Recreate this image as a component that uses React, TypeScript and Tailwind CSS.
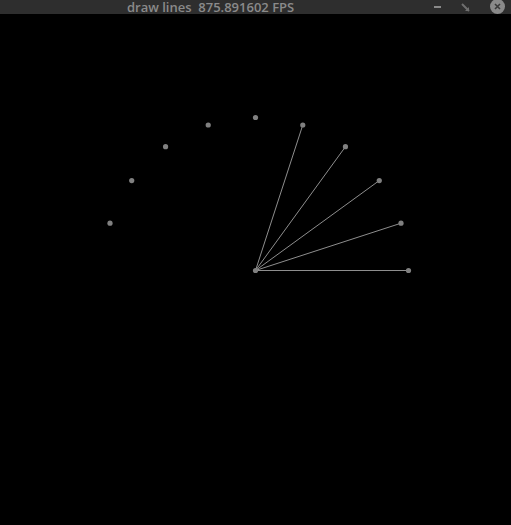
import React from "react";

const CX = 255.5;
const CY = 256.5;
const R = 153;

const points = Array.from({ length: 10 }, (_, i) => {
  const a = (i * 18 * Math.PI) / 180;
  return { x: CX + R * Math.cos(a), y: CY - R * Math.sin(a) };
});

const TitleBar = () => (
  <div className="relative flex h-[14px] shrink-0 items-center overflow-hidden bg-[#2e2e2e]">
    <span
      className="ml-[127px] whitespace-pre text-[13px] font-semibold leading-[14px] text-[#8a8a8a]"
      style={{ fontFamily: '"Open Sans", "DejaVu Sans", sans-serif' }}
    >
      draw lines  875.891602 FPS
    </span>
    <div className="ml-auto flex items-center gap-[20px] pr-[6px]">
      <div className="h-[2px] w-[7px] bg-[#8a8a8a]" />
      <svg width="9" height="9" viewBox="0 0 9 9">
        <path d="M1 1 L8 8" stroke="#6f6f6f" strokeWidth="2" />
        <path d="M4 8 L8 8 L8 4 Z" fill="#6f6f6f" />
      </svg>
      <div className="flex h-[15px] w-[15px] -translate-y-[1px] items-center justify-center rounded-full bg-[#8a8a8a]">
        <svg width="7" height="7" viewBox="0 0 7 7">
          <path d="M1 1 L6 6 M6 1 L1 6" stroke="#3a3a3a" strokeWidth="1.6" />
        </svg>
      </div>
    </div>
  </div>
);

const App = () => {
  return (
    <div className="flex h-[525px] w-[511px] flex-col overflow-hidden bg-black">
      <TitleBar />
      <div className="flex-1 bg-black">
        <svg width="511" height="511" viewBox="0 0 511 511" className="block">
          {points.slice(0, 5).map((p, i) => (
            <line
              key={`l${i}`}
              x1={CX}
              y1={CY}
              x2={p.x}
              y2={p.y}
              stroke="#8e8e8e"
              strokeWidth="1"
            />
          ))}
          <circle cx={CX} cy={CY} r="2.6" fill="#808080" />
          {points.map((p, i) => (
            <circle key={`p${i}`} cx={p.x} cy={p.y} r="2.6" fill="#808080" />
          ))}
        </svg>
      </div>
    </div>
  );
};

export default App;
